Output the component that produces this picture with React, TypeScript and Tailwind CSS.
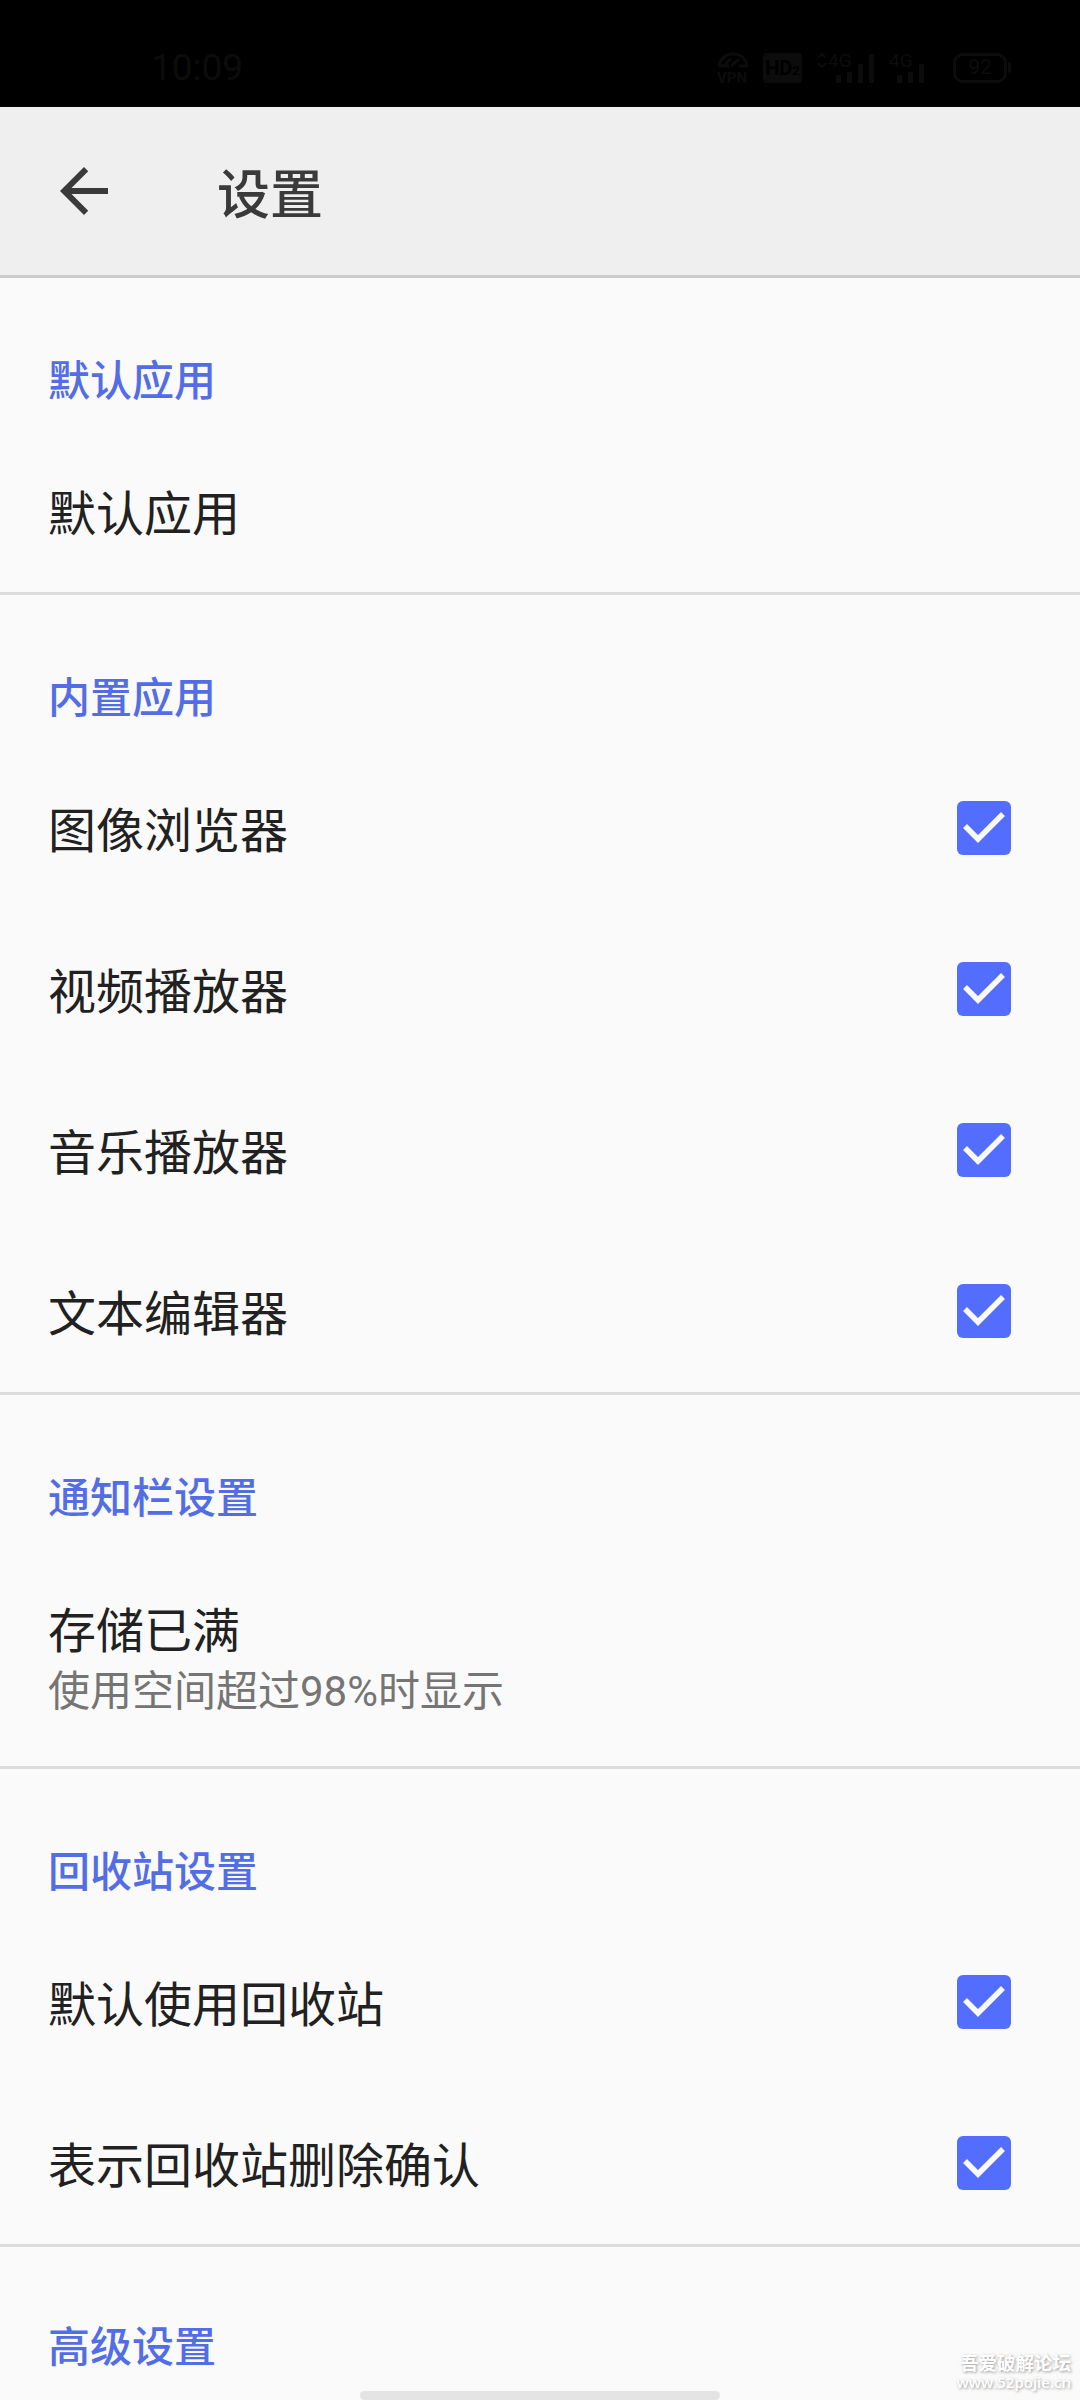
import clsx from "clsx"

interface SettingItem {
  title: string
  summary?: string
  checked?: boolean
}

interface SettingSection {
  heading: string
  items: SettingItem[]
}

const sections: SettingSection[] = [
  { heading: "默认应用", items: [{ title: "默认应用" }] },
  {
    heading: "内置应用",
    items: [
      { title: "图像浏览器", checked: true },
      { title: "视频播放器", checked: true },
      { title: "音乐播放器", checked: true },
      { title: "文本编辑器", checked: true },
    ],
  },
  {
    heading: "通知栏设置",
    items: [{ title: "存储已满", summary: "使用空间超过98%时显示" }],
  },
  {
    heading: "回收站设置",
    items: [
      { title: "默认使用回收站", checked: true },
      { title: "表示回收站删除确认", checked: true },
    ],
  },
  { heading: "高级设置", items: [] },
]

function Signal({ bars, roaming }: { bars: number; roaming?: boolean }) {
  return (
    <svg width="58" height="48" viewBox="0 -8 58 48" fill="currentColor">
      {roaming && (
        <path
          d="M0 6l4-4 4 4M0 11l4 4 4-4"
          fill="none"
          stroke="currentColor"
          strokeWidth="2"
        />
      )}
      <text x="10" y="15" fontSize="19" fontFamily="Roboto">
        4G
      </text>
      <rect x="18" y="23" width="5" height="8" />
      <rect x="29" y="20" width="5" height="11" />
      <rect x="40" y="12" width="5" height="19" />
      {bars > 3 && <rect x="51" y="2" width="5" height="29" />}
    </svg>
  )
}

function StatusBar() {
  return (
    <div className="flex h-[107px] items-center justify-between bg-black pt-[28px] pr-[69px] pl-[151px] text-[#0c0c0c]">
      <span className="font-[Roboto] text-[37px] leading-none">10:09</span>
      <div className="flex h-12 items-center">
        <svg width="36" height="48" viewBox="-2 -8 36 48" fill="none">
          <path
            d="M2 15a14 13 0 0 1 28 0M2 14h10M9 13a8 8 0 0 1 5-6M14 14l8-7M22 14h8"
            stroke="currentColor"
            strokeWidth="3"
          />
          <text
            x="0"
            y="31"
            fontSize="15"
            fontWeight="700"
            fontFamily="Roboto"
            fill="currentColor"
          >
            VPN
          </text>
        </svg>
        <div className="ml-3 flex h-[30px] w-[39px] items-center justify-center rounded bg-current">
          <span className="font-[Roboto] text-[20px] leading-none font-bold text-black">
            HD<span className="text-[13px]">2</span>
          </span>
        </div>
        <div className="ml-4 flex">
          <Signal bars={4} roaming />
        </div>
        <div className="ml-[3px] flex">
          <Signal bars={3} />
        </div>
        <div className="ml-4 flex h-[30px] w-[54px] items-center justify-center rounded-[10px] border-[3px] border-current font-[Roboto] text-[21px] leading-none">
          92
        </div>
        <div className="ml-px h-[11px] w-[3px] rounded-r bg-current" />
      </div>
    </div>
  )
}

function Toolbar() {
  return (
    <header className="flex h-[171px] items-center border-b-[3px] border-[#cbcbcb] bg-[#efefef] pl-12">
      <svg
        width="72"
        height="72"
        viewBox="0 0 24 24"
        fill="#3a3a3a"
        className="shrink-0"
      >
        <path d="M20 11H7.830l5.590-5.590L12 4l-8 8 8 8 1.410-1.410L7.830 13H20v-2z" />
      </svg>
      <h1 className="ml-[97px] text-[53px] leading-[80px] font-medium text-[#3a3a3a]">
        设置
      </h1>
    </header>
  )
}

function Checkbox() {
  return (
    <span className="flex size-[54px] items-center justify-center rounded-[6px] bg-[#536dfe]">
      <svg width="54" height="54" viewBox="0 0 54 54" fill="none">
        <path d="M8 25l13 13 25-25" stroke="#fafafa" strokeWidth="5.500" />
      </svg>
    </span>
  )
}

function Row({ title, summary, checked }: SettingItem) {
  return (
    <div
      className={clsx(
        "flex items-center justify-between pr-[69px] pb-px pl-12",
        summary ? "h-[218px]" : "h-[161px]"
      )}
    >
      <div className="pb-[2px]">
        <p className="text-[48px] leading-[64px] text-[#212121]">{title}</p>
        {summary && (
          <p className="-mb-2 font-[Roboto,'Noto_Sans_CJK_SC',sans-serif] text-[42px] leading-[66px] text-[#757575]">
            {summary}
          </p>
        )}
      </div>
      {checked && <Checkbox />}
    </div>
  )
}

function Section({ heading, items }: SettingSection) {
  return (
    <section
      className={clsx(items.length > 0 && "border-b-[3px] border-[#dcdcdc]")}
    >
      <h2
        className={clsx(
          "h-[153px] pl-12 text-[42px] leading-[60px] font-medium text-[#536de6]",
          items.length > 0 ? "pt-[70px]" : "pt-[67px]"
        )}
      >
        {heading}
      </h2>
      {items.map((item) => (
        <Row key={item.title} {...item} />
      ))}
    </section>
  )
}

export default function App() {
  return (
    <div className="relative h-[2400px] w-[1080px] overflow-hidden bg-[#fafafa] font-['Noto_Sans_CJK_SC',sans-serif]">
      <StatusBar />
      <Toolbar />
      <main>
        {sections.map((section) => (
          <Section key={section.heading} {...section} />
        ))}
      </main>

      {/* gesture bar */}
      <div className="absolute bottom-0 left-[360px] h-[9px] w-[360px] rounded-full bg-[#e4e4e4]" />

      <div className="absolute right-[9px] bottom-[8px] text-right whitespace-nowrap text-white [text-shadow:1px_1px_3px_#999]">
        <p className="text-[18.500px] leading-[20px] font-bold">吾爱破解论坛</p>
        <p className="font-['Open_Sans'] text-[15px] leading-[20px] font-semibold">
          www.52pojie.cn
        </p>
      </div>
    </div>
  )
}
